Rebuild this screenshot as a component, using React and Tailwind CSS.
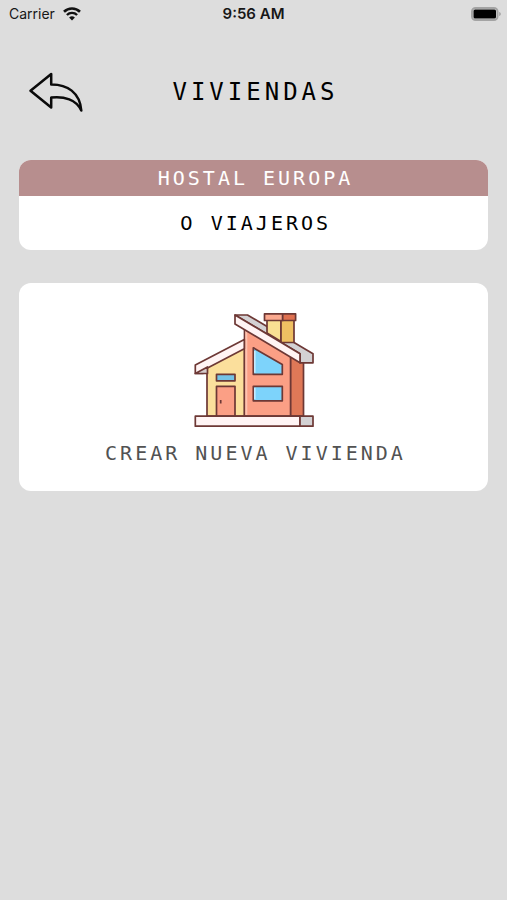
const viviendas = [{ id: 1, nombre: 'HOSTAL EUROPA', viajeros: 0 }]

function WifiIcon() {
  return (
    <svg viewBox="0 0 18 14" className="w-[18px] h-[14px]" fill="none" stroke="#111" aria-hidden="true">
      <path d="M1 4.8a11.4 11.4 0 0 1 16 0" strokeWidth="2.6" />
      <path d="M3.9 8a7.2 7.2 0 0 1 10.2 0" strokeWidth="2.4" />
      <path d="M9 13.6 6.1 10.6a4.1 4.1 0 0 1 5.8 0z" fill="#111" stroke="none" />
    </svg>
  )
}

function BatteryIcon() {
  return (
    <svg viewBox="0 0 30 14" className="w-[30px] h-[14px]" aria-hidden="true">
      <rect x="1" y="1" width="25.500" height="12" rx="3.6" fill="none" stroke="#a3a3a3" strokeWidth="2" />
      <rect x="2.500" y="2.500" width="22.500" height="9" rx="1.6" fill="#000" />
      <path d="M28.2 5v4c1-.4 1.6-1.1 1.6-2s-.6-1.6-1.6-2z" fill="#a3a3a3" />
    </svg>
  )
}

function BackIcon() {
  return (
    <svg
      viewBox="29 72 54 40"
      className="w-[54px] h-10"
      fill="none"
      stroke="#0a0a0a"
      strokeWidth="2.5"
      strokeLinejoin="round"
      aria-hidden="true"
    >
      <path d="M30.5 90.7 51.2 74v10.400C67 84.200 80 92.500 81.300 110.600 76.500 99.500 64 96 51.200 97.500v10z" />
    </svg>
  )
}

function HouseIcon() {
  return (
    <svg
      viewBox="194 311 120 120"
      className="w-[120px] h-[120px]"
      stroke="#6d3835"
      strokeWidth="1.7"
      strokeLinejoin="round"
      aria-hidden="true"
    >
      {/* walls */}
      <path d="M207 366 244.500 346v70H207z" fill="#fbdf9c" />
      <path d="M244.500 325 290.700 353v63h-46.200z" fill="#fb9f85" />
      <path d="M246.300 331v84" stroke="#fdc3b1" strokeWidth="2" />
      <path d="M290.700 353 303.500 360v56h-12.800z" fill="#df7857" />

      {/* roofs and chimney */}
      <path d="M195.300 365 244.300 339.500v9.300L207.500 368l-4.500 5.500h-7.700z" fill="#fff4f4" />
      <path d="M195.300 373.500 207.500 367v6.500z" fill="#d5cccc" />
      <path d="M235 315h12.500L313 353.800v9h-13v-9z" fill="#d3d1d3" />
      <path d="M267 320h14v21.500l-14-8.500z" fill="#f9df93" />
      <path d="M281 320h13v22.500h-13z" fill="#efc062" />
      <path d="M264.500 313.800h18.200v6.700h-18.200z" fill="#fba98f" />
      <path d="M282.700 313.800h12.900v6.700h-12.900z" fill="#df7050" />
      <path d="M235 315 300 353.800v9L235 324z" fill="#fff4f4" />

      {/* windows and door */}
      <path d="M253.300 347.800 282.300 364.500v9.800h-29z" fill="#7dd3fb" />
      <path d="M253.300 386.300h29v14.500h-29z" fill="#7dd3fb" />
      <path d="M254.800 351v21.700M254.800 387.800v11.500" stroke="#c9edff" strokeWidth="1.5" />
      <path d="M216.500 374.300h18.500v6.500h-18.500z" fill="#74c3e6" />
      <path d="M216.500 386.300h18.500V416h-18.500z" fill="#fb9f85" />
      <path d="M220.700 400v3.500" />

      {/* base */}
      <path d="M195.300 416.200H300v10H195.300z" fill="#fff4f4" />
      <path d="M300 416.200h13v10h-13z" fill="#d3d1d3" />
    </svg>
  )
}

function StatusBar() {
  return (
    <div className="grid grid-cols-3 items-center h-7 px-1.5 font-['Inter',sans-serif] text-sm leading-5 text-neutral-900">
      <div className="flex items-center gap-2 pl-[3px]">
        <span>Carrier</span>
        <WifiIcon />
      </div>
      <span className="text-center text-[15px] font-semibold">9:56 AM</span>
      <div className="flex justify-end">
        <BatteryIcon />
      </div>
    </div>
  )
}

function ViviendaCard({ vivienda }) {
  return (
    <button type="button" className="block w-full overflow-hidden rounded-xl bg-white text-xl leading-7 tracking-[3px]">
      <span className="block bg-[#b78e8e] py-1 pl-1 text-white">{vivienda.nombre}</span>
      <span className="block py-[13px] pl-1 text-black">
        <span className="font-['DejaVu_Sans',sans-serif]">{vivienda.viajeros}</span> VIAJEROS
      </span>
    </button>
  )
}

export default function App() {
  return (
    <div className="min-h-screen bg-[#dddddd] font-['DejaVu_Sans_Mono',monospace]">
      <StatusBar />
      <header className="grid grid-cols-[1fr_auto_1fr] items-center px-[29px] pt-11">
        <button type="button" aria-label="Volver" className="justify-self-start">
          <BackIcon />
        </button>
        <h1 className="pl-1 text-2xl leading-9 tracking-[4px] text-black">VIVIENDAS</h1>
      </header>
      <main className="flex flex-col gap-[33px] px-[19px] pt-12">
        {viviendas.map(v => (
          <ViviendaCard key={v.id} vivienda={v} />
        ))}
        <button type="button" className="flex w-full flex-col items-center rounded-xl bg-white pt-7 pb-6">
          <HouseIcon />
          <span className="mt-2 pl-1 text-xl leading-7 tracking-[3px] text-neutral-600">CREAR NUEVA VIVIENDA</span>
        </button>
      </main>
    </div>
  )
}
